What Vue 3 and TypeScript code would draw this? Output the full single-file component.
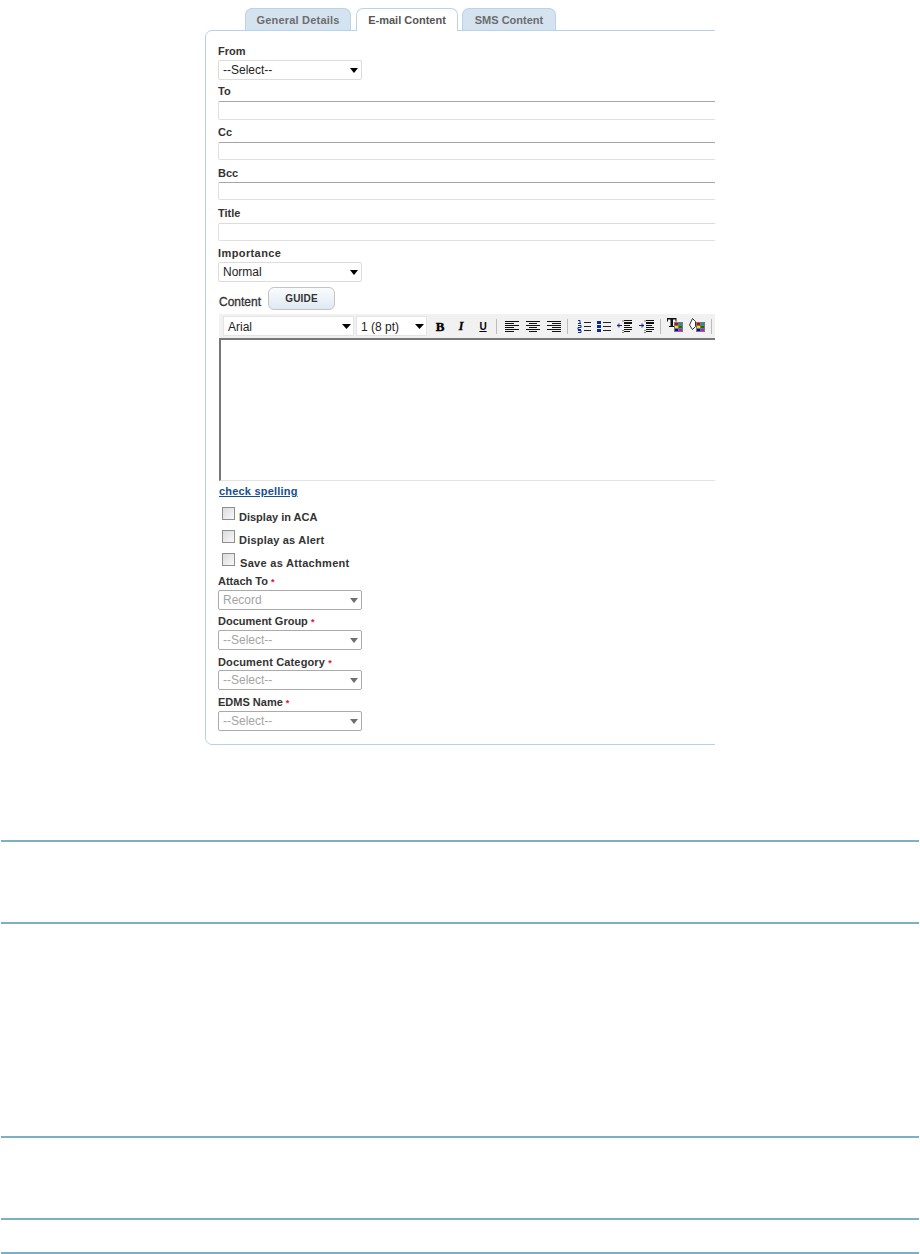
<script setup lang="ts">
const tabs = [
  { label: 'General Details', active: false },
  { label: 'E-mail Content', active: true },
  { label: 'SMS Content', active: false }
]
const attachFields = [
  { label: 'Attach To', value: 'Record', cls: 'f-attach' },
  { label: 'Document Group', value: '--Select--', cls: 'f-group' },
  { label: 'Document Category', value: '--Select--', cls: 'f-cat' },
  { label: 'EDMS Name', value: '--Select--', cls: 'f-edms' }
]
const checks = [
  { label: 'Display in ACA', cls: '' },
  { label: 'Display as Alert', cls: 'alert' },
  { label: 'Save as Attachment', cls: 'wide' }
]
const textFields = ['To', 'Cc', 'Bcc', 'Title']
const swatches = ['#e00000', '#00a0a0', '#e8e800', '#008000', '#0000e0', '#e000e0']
</script>

<template>
  <div class="page">
    <div class="clip">
      <div class="tabs">
        <div v-for="t in tabs" :key="t.label" class="tab" :class="{ active: t.active }">{{ t.label }}</div>
      </div>
      <div class="panel">
        <div class="label first">From</div>
        <div class="sel"><span>--Select--</span><svg width="8" height="5" viewBox="0 0 8 5"><path d="M0 0h8L4 5z" fill="#000" /></svg></div>

        <template v-for="f in textFields" :key="f">
          <div class="label tf" :class="'l-' + f">{{ f }}</div>
          <div class="input" :class="'i-' + f"></div>
        </template>

        <div class="label imp">Importance</div>
        <div class="sel"><span>Normal</span><svg width="8" height="5" viewBox="0 0 8 5"><path d="M0 0h8L4 5z" fill="#000" /></svg></div>

        <div class="content-row">
          <span class="content-label">Content</span>
          <button class="guide" type="button">GUIDE</button>
        </div>

        <div class="editor">
          <div class="toolbar">
            <div class="tsel font"><span>Arial</span><svg width="9" height="5" viewBox="0 0 9 5"><path d="M0 0h9L4.500 5z" fill="#000" /></svg></div>
            <div class="tsel size"><span>1 (8 pt)</span><svg width="9" height="5" viewBox="0 0 9 5"><path d="M0 0h9L4.500 5z" fill="#000" /></svg></div>
            <span class="fmt b">B</span>
            <span class="fmt i">I</span>
            <span class="fmt u">U</span>
            <i class="sep s1"></i>
            <svg class="ic first-align" width="14" height="11" viewBox="0 0 14 11"><path d="M0 .5h14M0 2.500h9M0 4.500h14M0 6.500h9M0 8.500h14M0 10.500h9" stroke="#111" /></svg>
            <svg class="ic" width="14" height="11" viewBox="0 0 14 11"><path d="M0 .5h14M3 2.500h8M0 4.500h14M3 6.500h8M0 8.500h14M3 10.500h8" stroke="#111" /></svg>
            <svg class="ic" width="14" height="11" viewBox="0 0 14 11"><path d="M0 .5h14M5 2.500h9M0 4.500h14M5 6.500h9M0 8.500h14M5 10.500h9" stroke="#111" /></svg>
            <i class="sep s2"></i>
            <svg class="ic ol" width="14" height="13" viewBox="0 0 14 13"><path d="M1 0.500h2v3M1 3.500h3M1 5.500h3v2H1v2h3M1 10.500h3v2H1" fill="none" stroke="#0a2a9a" /><path d="M7 2.500h7M7 6.500h7M7 10.500h7" stroke="#222" /></svg>
            <svg class="ic ul" width="14" height="13" viewBox="0 0 14 13"><path d="M0 1h4v3H0zM0 5h4v3H0zM0 9h4v3H0z" fill="#0a2a9a" /><path d="M6 2.500h8M6 6.500h8M6 10.500h8" stroke="#222" /></svg>
            <svg class="ic od" width="15" height="13" viewBox="0 0 15 13">
              <path d="M0 5.500h5M1 4.500v2M2 3.500v4" stroke="#0a2a9a" fill="none" />
              <path d="M6 .5v1M6 10v1M6 12v1" stroke="#111" fill="none" />
              <path d="M7 .5h8M7 2.500h8M7 3.500h8M7 5.500h6M7 7.500h8M7 9.500h8M7 11.500h6" stroke="#111" fill="none" />
            </svg>
            <svg class="ic od2" width="15" height="13" viewBox="0 0 15 13">
              <path d="M0 5.500h5M4 4.500v2M3 3.500v4" stroke="#0a2a9a" fill="none" />
              <path d="M6 .5v1M6 10v1M6 12v1" stroke="#111" fill="none" />
              <path d="M7 .5h8M7 2.500h8M7 3.500h8M7 5.500h6M7 7.500h8M7 9.500h8M7 11.500h6" stroke="#111" fill="none" />
            </svg>
            <i class="sep s3"></i>
            <svg class="ic tc" width="16" height="14" viewBox="0 0 16 14">
              <path d="M0 0h9.500v3.500H8.500V1.500H6V8H7.500v1H2V8h1.500V1.500H1V3.500H0z" fill="#111" />
              <rect x="7" y="4" width="9" height="10" fill="#777" />
              <rect v-for="(c, n) in swatches" :key="n" :x="8 + (n % 2) * 4" :y="5 + Math.floor(n / 2) * 3" width="3" height="2" :fill="c" />
            </svg>
            <svg class="ic bc" width="16" height="14" viewBox="0 0 16 14">
              <path d="M3.500 .5l3 3v5l-3 3-3-4.500z" fill="#fff" stroke="#333" />
              <rect x="7" y="4" width="9" height="10" fill="#777" />
              <rect v-for="(c, n) in swatches" :key="n" :x="8 + (n % 2) * 4" :y="5 + Math.floor(n / 2) * 3" width="3" height="2" :fill="c" />
            </svg>
            <i class="sep s4"></i>
          </div>
          <div class="area"></div>
        </div>

        <a class="spell">check spelling</a>

        <div class="checks">
          <label v-for="c in checks" :key="c.label" class="chk" :class="c.cls">
            <span class="box"></span><span class="chk-text">{{ c.label }}</span>
          </label>
        </div>

        <template v-for="f in attachFields" :key="f.label">
          <div class="label af" :class="f.cls">{{ f.label }} <em>*</em></div>
          <div class="sel disabled"><span>{{ f.value }}</span><svg width="8" height="5" viewBox="0 0 8 5"><path d="M0 0h8L4 5z" fill="#6e6e6e" /></svg></div>
        </template>
      </div>
    </div>

    <div class="rules">
      <div class="rule r1"></div>
      <div class="rule r2"></div>
      <div class="rule r3"></div>
      <div class="rule r4"></div>
      <div class="rule r5"></div>
    </div>
  </div>
</template>

<style>
html, body { margin: 0; background: #fff; overflow: hidden; }
</style>

<style scoped>
.page {
  width: 920px;
  height: 1254px;
  overflow: hidden;
  background: #fff;
  font-family: "Liberation Sans", Arial, sans-serif;
  color: #333;
}
.clip {
  width: 510px;
  height: 745px;
  margin-left: 205px;
  padding-top: 8px;
  overflow: hidden;
  box-sizing: border-box;
}
.tabs {
  display: flex;
  gap: 5px;
  height: 22px;
  padding-left: 40px;
}
.tab {
  box-sizing: border-box;
  height: 23px;
  width: 106px;
  border: 1px solid #b9d3ea;
  border-bottom: 0;
  border-radius: 7px 7px 0 0;
  background: #d5e2ef;
  color: #6d6d6d;
  font-size: 11px;
  font-weight: 700;
  line-height: 23px;
  text-align: center;
  position: relative;
  z-index: 0;
}
.tab:nth-child(1) { letter-spacing: 0.2px; }
.tab:nth-child(2) { width: 102px; }
.tab:nth-child(3) { width: 94px; margin-left: -1px; }
.tab.active {
  background: #fff;
  color: #555;
  z-index: 2;
}
.panel {
  box-sizing: border-box;
  width: 700px;
  height: 715px;
  border: 1px solid #b5d2ea;
  border-radius: 7px;
  padding: 14px 0 0 12px;
  background: #fff;
  position: relative;
  z-index: 1;
}
.label {
  font-size: 11px;
  font-weight: 700;
  line-height: 13px;
  color: #333;
}
.label em { color: #e0103a; font-style: normal; font-size: 9px; }
.label.first { height: 15px; }
.sel {
  box-sizing: border-box;
  width: 144px;
  height: 20px;
  border: 1px solid #dcdcdc;
  border-radius: 2px;
  display: flex;
  align-items: center;
  justify-content: space-between;
  padding: 0 3px 0 4px;
  font-size: 12px;
  color: #222;
  background: #fff;
}
.sel.disabled {
  border-color: #aaa;
  color: #a4a4a4;
  padding-right: 3px;
}
.l-To { margin-top: 5px; height: 16px; }
.l-Cc { margin-top: 6px; height: 16px; }
.l-Bcc { margin-top: 7px; height: 15px; }
.l-Title { margin-top: 7px; height: 16px; }
.input {
  box-sizing: border-box;
  height: 18px;
  border: 1px solid #e0e0e0;
  border-top: 1px solid #a6a6a6;
  border-radius: 2px;
  background: #fff;
}
.i-To { height: 19px; }
.i-Title { border-top-color: #dcdcdc; }
.label.imp { margin-top: 6px; height: 15px; letter-spacing: 0.4px; }
.content-row {
  display: flex;
  align-items: flex-end;
  height: 23px;
  margin-top: 5px;
}
.content-label {
  font-size: 12px;
  -webkit-text-stroke: 0.3px #333;
  color: #333;
  margin-left: 1px;
  line-height: 15px;
  width: 49px;
}
.guide {
  box-sizing: border-box;
  width: 67px;
  height: 23px;
  border: 1px solid #c4c4c4;
  border-radius: 6px;
  background: linear-gradient(#fafcfe, #dfe9f4);
  font-family: inherit;
  font-size: 10px;
  font-weight: 700;
  letter-spacing: 0.2px;
  color: #333;
  padding: 0;
}
.editor { margin-top: 4px; margin-left: 1px; }
.toolbar {
  box-sizing: border-box;
  height: 24px;
  background: #f1f1f1;
  display: flex;
  align-items: center;
  padding-left: 4px;
}
.tsel {
  box-sizing: border-box;
  height: 20px;
  background: #fff;
  border: 1px solid #e4e4e4;
  display: flex;
  align-items: center;
  justify-content: space-between;
  font-size: 12px;
  color: #222;
  padding: 1px 2px 0 4px;
}
.tsel.font { width: 131px; }
.tsel.size { width: 71px; margin-left: 2px; }
.fmt {
  font-family: "Liberation Serif", serif;
  font-size: 13px;
  color: #000;
  width: 12px;
  text-align: center;
  line-height: 13px;
}
.fmt.b { font-weight: 700; margin-left: 7px; -webkit-text-stroke: 0.4px #000; }
.fmt.i { font-weight: 700; font-style: italic; margin-left: 9px; -webkit-text-stroke: 0.3px #000; font-size: 12px; }
.fmt.u { font-family: "Liberation Sans", sans-serif; font-size: 10px; font-weight: 700; text-decoration: underline; margin-left: 10px; }
.sep {
  display: block;
  flex: none;
  width: 1px;
  height: 15px;
  background: #bbb;
  margin-left: 6px;
}
.sep.s1 { margin-left: 7px; }
.ic { flex: none; margin-left: 7px; }
.ic.first-align { margin-left: 8px; }
.ic.ol { margin-left: 9px; }
.ic.ul { margin-left: 6px; }
.ic.od { margin-left: 6px; }
.ic.od2 { margin-left: 7px; }
.ic.tc { margin-left: 6px; margin-top: -2px; }
.ic.bc { margin-left: 6px; margin-top: -2px; }
.area {
  box-sizing: border-box;
  height: 143px;
  border-top: 2px solid #777;
  border-left: 2px solid #777;
  border-bottom: 1px solid #e3e3e3;
  background: #fff;
}
.spell {
  display: block;
  margin: 4px 0 0 1px;
  font-size: 11px;
  font-weight: 700;
  letter-spacing: 0.2px;
  line-height: 13px;
  color: #15508f;
  text-decoration: underline;
  cursor: pointer;
}
.checks { margin-top: 10px; display: flex; flex-direction: column; gap: 10px; padding-left: 4px; }
.chk {
  display: flex;
  align-items: flex-start;
  height: 13px;
  font-size: 11px;
  font-weight: 700;
  line-height: 13px;
  color: #333;
}
.chk-text { margin-top: 3px; }
.box {
  box-sizing: border-box;
  width: 13px;
  height: 13px;
  border: 1px solid #8e8e8e;
  background: linear-gradient(135deg, #dcdcdc, #f8f8f8);
  margin-right: 4px;
  margin-top: -1px;
}
.chk.alert .chk-text { letter-spacing: 0.2px; }
.chk.wide .chk-text { margin-left: 1px; letter-spacing: 0.3px; }
.label.af { height: 15px; }
.label.f-attach { margin-top: 8px; }
.label.f-group { margin-top: 5px; }
.label.f-cat { margin-top: 6px; height: 14px; letter-spacing: 0.15px; }
.label.f-edms { margin-top: 6px; }
.rules { position: relative; }
.rule {
  position: absolute;
  left: 1px;
  width: 918px;
  height: 2px;
  background: #7cb0c4;
}
.r1 { top: 95px; }
.r2 { top: 177px; }
.r3 { top: 391px; }
.r4 { top: 473px; }
.r5 { top: 507px; }
</style>
